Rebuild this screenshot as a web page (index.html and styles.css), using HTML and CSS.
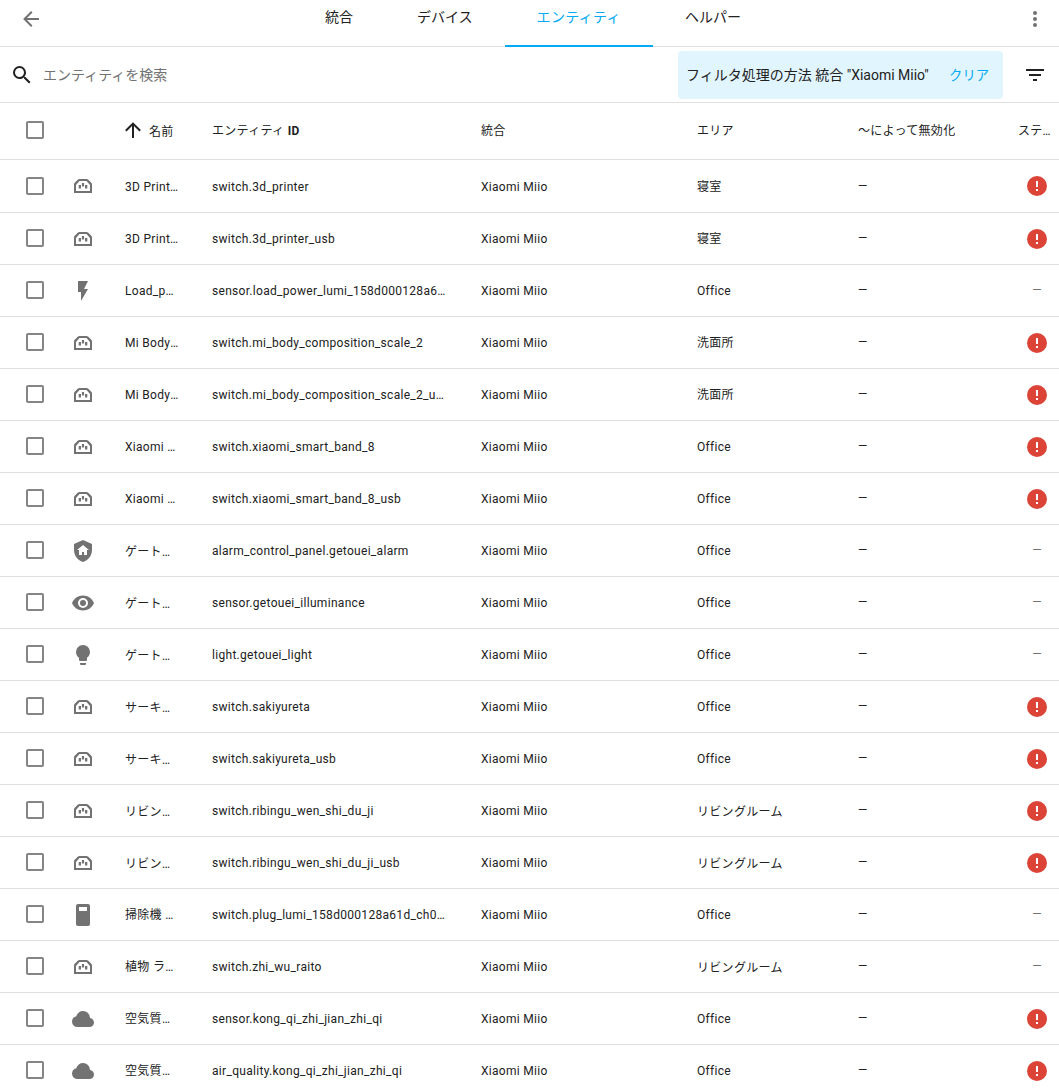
FILE: index.html
```html
<!DOCTYPE html>
<html lang="ja">
<head>
<meta charset="utf-8">
<title>エンティティ</title>
<link rel="stylesheet" href="styles.css">
</head>
<body>
<svg class="defs" width="0" height="0" aria-hidden="true">
  <symbol id="i-socket" viewBox="0 0 24 24"><path fill-rule="evenodd" d="M3 19V10.500C3 9.800 3.200 9.300 3.700 8.700L6.700 5.800C7.200 5.300 7.700 5 8.500 5H15.500C16.300 5 16.800 5.300 17.300 5.800L20.300 8.700C20.800 9.300 21 9.800 21 10.500V19ZM5 17H19V11L15.500 7H8.500L5 11ZM7.700 11H10V14.500H7.700ZM10.900 9H13.100V12.500H10.900ZM14 11H16.300V14.500H14Z"/></symbol>
  <symbol id="i-flash" viewBox="0 0 24 24"><path d="M7 2V13H10V22L17 10H13L17 2H7Z"/></symbol>
  <symbol id="i-shield" viewBox="0 0 24 24"><path d="M11 13H13V16H16V11H18L12 6L6 11H8V16H11V13M12 1L21 5V11C21 16.55 17.16 21.74 12 23C6.84 21.74 3 16.55 3 11V5L12 1Z"/></symbol>
  <symbol id="i-eye" viewBox="0 0 24 24"><path d="M12,9A3,3 0 0,0 9,12A3,3 0 0,0 12,15A3,3 0 0,0 15,12A3,3 0 0,0 12,9M12,17A5,5 0 0,1 7,12A5,5 0 0,1 12,7A5,5 0 0,1 17,12A5,5 0 0,1 12,17M12,4.5C7,4.5 2.73,7.61 1,12C2.73,16.39 7,19.5 12,19.5C17,19.5 21.27,16.39 23,12C21.27,7.61 17,4.5 12,4.5Z"/></symbol>
  <symbol id="i-bulb" viewBox="0 0 24 24"><path d="M12,2A7,7 0 0,0 5,9C5,11.38 6.19,13.47 8,14.74V17A1,1 0 0,0 9,18H15A1,1 0 0,0 16,17V14.74C17.81,13.47 19,11.38 19,9A7,7 0 0,0 12,2M9,21A1,1 0 0,0 10,22H14A1,1 0 0,0 15,21V20H9V21Z"/></symbol>
  <symbol id="i-box" viewBox="0 0 24 24"><path fill-rule="evenodd" d="M7 1H17A2 2 0 0 1 19 3V21A2 2 0 0 1 17 23H7A2 2 0 0 1 5 21V3A2 2 0 0 1 7 1ZM8 4V8H16V4Z"/></symbol>
  <symbol id="i-cloud" viewBox="0 0 24 24"><path d="M6.5 20Q4.22 20 2.61 18.43 1 16.85 1 14.58 1 12.63 2.17 11.1 3.35 9.57 5.25 9.15 5.88 6.85 7.75 5.43 9.63 4 12 4 14.93 4 16.96 6.04 19 8.07 19 11 20.73 11.2 21.86 12.5 23 13.78 23 15.5 23 17.38 21.69 18.69 20.38 20 18.5 20Z"/></symbol>
  <symbol id="i-alert" viewBox="0 0 24 24"><path d="M13,13H11V7H13M13,17H11V15H13M12,2A10,10 0 0,0 2,12A10,10 0 0,0 12,22A10,10 0 0,0 22,12A10,10 0 0,0 12,2Z"/></symbol>
</svg>

<header class="topbar">
  <svg class="icon back" viewBox="0 0 24 24"><path d="M20,11V13H8L13.5,18.5L12.08,19.92L4.16,12L12.08,4.08L13.5,5.5L8,11H20Z"/></svg>
  <nav class="tabs">
    <span class="tab">統合</span>
    <span class="tab">デバイス</span>
    <span class="tab tab-active">エンティティ</span>
    <span class="tab">ヘルパー</span>
  </nav>
  <svg class="icon menu" viewBox="0 0 24 24"><path d="M12,16A2,2 0 0,1 14,18A2,2 0 0,1 12,20A2,2 0 0,1 10,18A2,2 0 0,1 12,16M12,10A2,2 0 0,1 14,12A2,2 0 0,1 12,14A2,2 0 0,1 10,12A2,2 0 0,1 12,10M12,4A2,2 0 0,1 14,6A2,2 0 0,1 12,8A2,2 0 0,1 10,6A2,2 0 0,1 12,4Z"/></svg>
</header>

<section class="searchbar">
  <svg class="icon search-icon" viewBox="0 0 24 24"><path d="M9.5,3A6.5,6.5 0 0,1 16,9.5C16,11.11 15.41,12.59 14.44,13.73L14.71,14H15.5L20.5,19L19,20.5L14,15.5V14.71L13.73,14.44C12.59,15.41 11.11,16 9.5,16A6.5,6.5 0 0,1 3,9.5A6.5,6.5 0 0,1 9.5,3M9.5,5C7,5 5,7 5,9.500C5,12 7,14 9.500,14C12,14 14,12 14,9.500C14,7 12,5 9.500,5Z"/></svg>
  <span class="search-text">エンティティを検索</span>
  <div class="filter-chip">
    <span class="filter-text">フィルタ処理の方法 統合 "Xiaomi Miio"</span>
    <span class="filter-clear">クリア</span>
  </div>
  <svg class="icon filter-icon" viewBox="0 0 24 24"><path d="M6,13H18V11H6M3,6V8H21V6M10,18H14V16H10V18Z"/></svg>
</section>

<div class="table">
  <div class="row head">
    <div class="cell check"><span class="box"></span></div>
    <div class="cell"></div>
    <div class="cell name head-name"><svg class="icon sort" viewBox="0 0 24 24"><path d="M13,20H11V8L5.5,13.500L4.08,12.080L12,4.160L19.920,12.080L18.500,13.500L13,8V20Z"/></svg><span>名前</span></div>
    <div class="cell id"><span class="clip">エンティティ <b class="idb">ID</b></span></div>
    <div class="cell"><span class="clip">統合</span></div>
    <div class="cell"><span class="clip">エリア</span></div>
    <div class="cell"><span class="clip">〜によって無効化</span></div>
    <div class="cell status-head"><span class="clip">ステータス</span></div>
  </div>

  <div class="row"><div class="cell check"><span class="box"></span></div><div class="cell ic"><svg class="icon"><use href="#i-socket"/></svg></div><div class="cell name"><span class="clip">3D Printer USB</span></div><div class="cell id"><span class="clip">switch.3d_printer</span></div><div class="cell"><span class="clip">Xiaomi Miio</span></div><div class="cell"><span class="clip">寝室</span></div><div class="cell">—</div><div class="cell st"><svg class="icon err"><use href="#i-alert"/></svg></div></div>
  <div class="row"><div class="cell check"><span class="box"></span></div><div class="cell ic"><svg class="icon"><use href="#i-socket"/></svg></div><div class="cell name"><span class="clip">3D Printer USB</span></div><div class="cell id"><span class="clip">switch.3d_printer_usb</span></div><div class="cell"><span class="clip">Xiaomi Miio</span></div><div class="cell"><span class="clip">寝室</span></div><div class="cell">—</div><div class="cell st"><svg class="icon err"><use href="#i-alert"/></svg></div></div>
  <div class="row"><div class="cell check"><span class="box"></span></div><div class="cell ic"><svg class="icon"><use href="#i-flash"/></svg></div><div class="cell name"><span class="clip">Load_power</span></div><div class="cell id"><span class="clip">sensor.load_power_lumi_158d000128a61d</span></div><div class="cell"><span class="clip">Xiaomi Miio</span></div><div class="cell"><span class="clip">Office</span></div><div class="cell">—</div><div class="cell st dash">—</div></div>
  <div class="row"><div class="cell check"><span class="box"></span></div><div class="cell ic"><svg class="icon"><use href="#i-socket"/></svg></div><div class="cell name"><span class="clip">Mi Body Composition</span></div><div class="cell id"><span class="clip">switch.mi_body_composition_scale_2</span></div><div class="cell"><span class="clip">Xiaomi Miio</span></div><div class="cell"><span class="clip">洗面所</span></div><div class="cell">—</div><div class="cell st"><svg class="icon err"><use href="#i-alert"/></svg></div></div>
  <div class="row"><div class="cell check"><span class="box"></span></div><div class="cell ic"><svg class="icon"><use href="#i-socket"/></svg></div><div class="cell name"><span class="clip">Mi Body Composition</span></div><div class="cell id"><span class="clip">switch.mi_body_composition_scale_2_usb</span></div><div class="cell"><span class="clip">Xiaomi Miio</span></div><div class="cell"><span class="clip">洗面所</span></div><div class="cell">—</div><div class="cell st"><svg class="icon err"><use href="#i-alert"/></svg></div></div>
  <div class="row"><div class="cell check"><span class="box"></span></div><div class="cell ic"><svg class="icon"><use href="#i-socket"/></svg></div><div class="cell name"><span class="clip">Xiaomi Smart Band 8</span></div><div class="cell id"><span class="clip">switch.xiaomi_smart_band_8</span></div><div class="cell"><span class="clip">Xiaomi Miio</span></div><div class="cell"><span class="clip">Office</span></div><div class="cell">—</div><div class="cell st"><svg class="icon err"><use href="#i-alert"/></svg></div></div>
  <div class="row"><div class="cell check"><span class="box"></span></div><div class="cell ic"><svg class="icon"><use href="#i-socket"/></svg></div><div class="cell name"><span class="clip">Xiaomi Smart Band 8 USB</span></div><div class="cell id"><span class="clip">switch.xiaomi_smart_band_8_usb</span></div><div class="cell"><span class="clip">Xiaomi Miio</span></div><div class="cell"><span class="clip">Office</span></div><div class="cell">—</div><div class="cell st"><svg class="icon err"><use href="#i-alert"/></svg></div></div>
  <div class="row"><div class="cell check"><span class="box"></span></div><div class="cell ic"><svg class="icon"><use href="#i-shield"/></svg></div><div class="cell name"><span class="clip kana">ゲートウェイ</span></div><div class="cell id"><span class="clip">alarm_control_panel.getouei_alarm</span></div><div class="cell"><span class="clip">Xiaomi Miio</span></div><div class="cell"><span class="clip">Office</span></div><div class="cell">—</div><div class="cell st dash">—</div></div>
  <div class="row"><div class="cell check"><span class="box"></span></div><div class="cell ic"><svg class="icon"><use href="#i-eye"/></svg></div><div class="cell name"><span class="clip kana">ゲートウェイ</span></div><div class="cell id"><span class="clip">sensor.getouei_illuminance</span></div><div class="cell"><span class="clip">Xiaomi Miio</span></div><div class="cell"><span class="clip">Office</span></div><div class="cell">—</div><div class="cell st dash">—</div></div>
  <div class="row"><div class="cell check"><span class="box"></span></div><div class="cell ic"><svg class="icon"><use href="#i-bulb"/></svg></div><div class="cell name"><span class="clip kana">ゲートウェイ</span></div><div class="cell id"><span class="clip">light.getouei_light</span></div><div class="cell"><span class="clip">Xiaomi Miio</span></div><div class="cell"><span class="clip">Office</span></div><div class="cell">—</div><div class="cell st dash">—</div></div>
  <div class="row"><div class="cell check"><span class="box"></span></div><div class="cell ic"><svg class="icon"><use href="#i-socket"/></svg></div><div class="cell name"><span class="clip kana">サーキュレータ</span></div><div class="cell id"><span class="clip">switch.sakiyureta</span></div><div class="cell"><span class="clip">Xiaomi Miio</span></div><div class="cell"><span class="clip">Office</span></div><div class="cell">—</div><div class="cell st"><svg class="icon err"><use href="#i-alert"/></svg></div></div>
  <div class="row"><div class="cell check"><span class="box"></span></div><div class="cell ic"><svg class="icon"><use href="#i-socket"/></svg></div><div class="cell name"><span class="clip kana">サーキュレータ</span></div><div class="cell id"><span class="clip">switch.sakiyureta_usb</span></div><div class="cell"><span class="clip">Xiaomi Miio</span></div><div class="cell"><span class="clip">Office</span></div><div class="cell">—</div><div class="cell st"><svg class="icon err"><use href="#i-alert"/></svg></div></div>
  <div class="row"><div class="cell check"><span class="box"></span></div><div class="cell ic"><svg class="icon"><use href="#i-socket"/></svg></div><div class="cell name"><span class="clip kana">リビング温湿度計</span></div><div class="cell id"><span class="clip">switch.ribingu_wen_shi_du_ji</span></div><div class="cell"><span class="clip">Xiaomi Miio</span></div><div class="cell"><span class="clip kana">リビングルーム</span></div><div class="cell">—</div><div class="cell st"><svg class="icon err"><use href="#i-alert"/></svg></div></div>
  <div class="row"><div class="cell check"><span class="box"></span></div><div class="cell ic"><svg class="icon"><use href="#i-socket"/></svg></div><div class="cell name"><span class="clip kana">リビング温湿度計</span></div><div class="cell id"><span class="clip">switch.ribingu_wen_shi_du_ji_usb</span></div><div class="cell"><span class="clip">Xiaomi Miio</span></div><div class="cell"><span class="clip kana">リビングルーム</span></div><div class="cell">—</div><div class="cell st"><svg class="icon err"><use href="#i-alert"/></svg></div></div>
  <div class="row"><div class="cell check"><span class="box"></span></div><div class="cell ic"><svg class="icon"><use href="#i-box"/></svg></div><div class="cell name"><span class="clip">掃除機 充電器</span></div><div class="cell id"><span class="clip">switch.plug_lumi_158d000128a61d_ch0_channel</span></div><div class="cell"><span class="clip">Xiaomi Miio</span></div><div class="cell"><span class="clip">Office</span></div><div class="cell">—</div><div class="cell st dash">—</div></div>
  <div class="row"><div class="cell check"><span class="box"></span></div><div class="cell ic"><svg class="icon"><use href="#i-socket"/></svg></div><div class="cell name"><span class="clip">植物 ライト</span></div><div class="cell id"><span class="clip">switch.zhi_wu_raito</span></div><div class="cell"><span class="clip">Xiaomi Miio</span></div><div class="cell"><span class="clip kana">リビングルーム</span></div><div class="cell">—</div><div class="cell st dash">—</div></div>
  <div class="row"><div class="cell check"><span class="box"></span></div><div class="cell ic"><svg class="icon"><use href="#i-cloud"/></svg></div><div class="cell name"><span class="clip">空気質モニター</span></div><div class="cell id"><span class="clip">sensor.kong_qi_zhi_jian_zhi_qi</span></div><div class="cell"><span class="clip">Xiaomi Miio</span></div><div class="cell"><span class="clip">Office</span></div><div class="cell">—</div><div class="cell st"><svg class="icon err"><use href="#i-alert"/></svg></div></div>
  <div class="row"><div class="cell check"><span class="box"></span></div><div class="cell ic"><svg class="icon"><use href="#i-cloud"/></svg></div><div class="cell name"><span class="clip">空気質モニター</span></div><div class="cell id"><span class="clip">air_quality.kong_qi_zhi_jian_zhi_qi</span></div><div class="cell"><span class="clip">Xiaomi Miio</span></div><div class="cell"><span class="clip">Office</span></div><div class="cell">—</div><div class="cell st"><svg class="icon err"><use href="#i-alert"/></svg></div></div>
</div>
</body>
</html>
```

FILE: styles.css
```css
html, body {
  margin: 0;
  height: 100%;
  overflow: hidden;
  background: #fff;
}
body {
  font-family: Roboto, "Noto Sans CJK JP", sans-serif;
  color: #212121;
  font-size: 12px;
  letter-spacing: 0.3px;
}
.defs { position: absolute; }
.icon {
  width: 24px;
  height: 24px;
  fill: #727272;
  flex: none;
  display: block;
}

/* top bar */
.topbar {
  height: 46px;
  border-bottom: 1px solid #e0e0e0;
  display: flex;
  align-items: flex-start;
}
.back { margin: 7px 0 0 19px; }
.tabs {
  display: flex;
  margin-left: 250px;
  height: 47px;
}
.tab {
  box-sizing: border-box;
  height: 47px;
  padding: 8px 32px 0;
  font-size: 14px;
  line-height: 19px;
  letter-spacing: 0;
  white-space: nowrap;
}
.tab-active {
  color: #03a9f4;
  border-bottom: 2px solid #03a9f4;
  letter-spacing: 0.33px;
}
.menu { margin: 7px 12px 0 auto; }

/* search row */
.searchbar {
  height: 55px;
  border-bottom: 1px solid #e0e0e0;
  display: flex;
  align-items: center;
  padding-left: 10px;
  padding-right: 12px;
}
.search-icon { fill: #212121; }
.search-text {
  margin-left: 9px;
  margin-bottom: 2px;
  font-size: 14px;
  letter-spacing: 0;
  color: #727272;
}
.filter-chip {
  margin-left: auto;
  box-sizing: border-box;
  width: 325px;
  height: 48px;
  margin-top: 1px;
  border-radius: 4px;
  background: #e1f5fe;
  display: flex;
  align-items: center;
  padding: 0 14px 2px 8px;
  font-size: 14px;
  letter-spacing: 0;
  white-space: nowrap;
}
.filter-clear {
  margin-left: auto;
  color: #03a9f4;
  font-size: 13.300px;
}
.filter-icon { margin-left: 20px; fill: #212121; }

/* table */
.row {
  display: grid;
  grid-template-columns: 70px 55px 87px 269px 216px 161px 161px 40px;
  height: 52px;
  box-sizing: border-box;
  align-items: center;
  border-top: 1px solid #e0e0e0;
  padding-bottom: 1px;
}
.row.head {
  height: 57px;
  border-top: 0;
  border-bottom: 1px solid #e0e0e0;
  padding-bottom: 2px;
}
.row.head + .row { border-top: 0; padding-bottom: 0; }
.cell {
  min-width: 0;
  display: flex;
  align-items: center;
}
.check { padding-left: 26px; }
.box {
  box-sizing: border-box;
  width: 18px;
  height: 18px;
  border: 2px solid #858585;
  border-radius: 2px;
}
.ic { padding-left: 1px; }
.ic .icon, .st .icon { margin-top: 2px; }
.row.head + .row .icon { margin-top: 0; }
.clip {
  overflow: hidden;
  white-space: nowrap;
  text-overflow: ellipsis;
  line-height: 16px;
  padding-top: 2px;
}
.clip.kana { padding-top: 4px; }
.name { padding-right: 33px; }
.id { padding-right: 34px; }
.head-name { margin-left: -4px; padding-right: 0; }
.head-name span { margin-left: 4px; }
.sort { fill: #212121; }
.idb { font-weight: 700; }
.status-head { padding-right: 6px; margin-left: -1px; }
.st { justify-content: center; margin-left: -4px; }
.err { fill: #db4437; }
.dash { color: #727272; }
```
